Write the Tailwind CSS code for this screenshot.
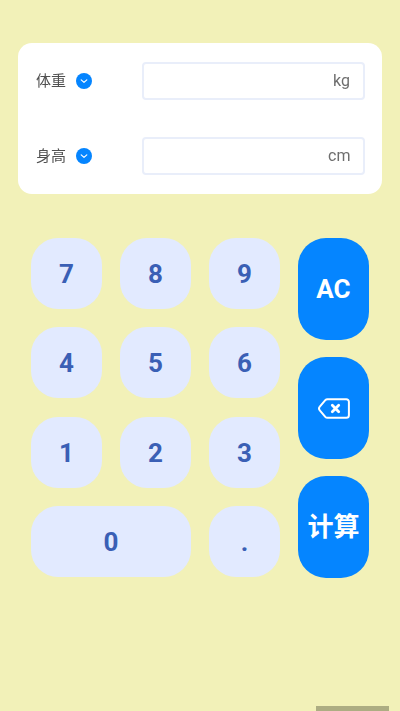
<!doctype html>
<html lang="zh">
<head>
<meta charset="utf-8">
<script src="https://cdn.jsdelivr.net/npm/@tailwindcss/browser@4"></script>
</head>
<body class="m-0">
<div class="relative h-[711px] w-[400px] overflow-hidden bg-[#f2f1b8] font-['Roboto','Noto_Sans_CJK_SC',sans-serif]">
  <div class="pt-[43px] px-[18px]">
    <div class="h-[151px] rounded-[14px] bg-white pl-[18px] pr-[17px] pt-[19px] flex flex-col gap-[37px]">
      <div class="flex items-center h-[38px]">
        <span class="w-[40px] text-[15px] leading-[20px] text-[#505050] will-change-transform">体重</span>
        <svg class="w-4 h-4" viewBox="0 0 16 16"><circle cx="8" cy="8" r="8" fill="#0585ff"/><path d="M5.2 6.9 8 9.4l2.8-2.5" fill="none" stroke="#fff" stroke-width="1.2" stroke-linecap="round" stroke-linejoin="round"/></svg>
        <div class="ml-auto flex h-[38px] w-[223px] items-center justify-end rounded-[4px] border-2 border-[#e9eefa] pr-[13px] text-[16px] text-[#6e6e6e]"><span class="will-change-transform">kg</span></div>
      </div>
      <div class="flex items-center h-[38px]">
        <span class="w-[40px] text-[15px] leading-[20px] text-[#505050] will-change-transform">身高</span>
        <svg class="w-4 h-4" viewBox="0 0 16 16"><circle cx="8" cy="8" r="8" fill="#0585ff"/><path d="M5.2 6.9 8 9.4l2.8-2.5" fill="none" stroke="#fff" stroke-width="1.2" stroke-linecap="round" stroke-linejoin="round"/></svg>
        <div class="ml-auto flex h-[38px] w-[223px] items-center justify-end rounded-[4px] border-2 border-[#e9eefa] pr-[13px] text-[16px] text-[#6e6e6e]"><span class="will-change-transform">cm</span></div>
      </div>
    </div>
  </div>
  <div class="mt-[44px] ml-[31px] flex gap-[18px]">
    <div class="grid w-[249px] grid-cols-[71px_71px_71px] auto-rows-[71px] gap-x-[18px] gap-y-[18.33px] text-[26px] font-bold text-[#3a5fb5]">
      <div class="flex items-center justify-center rounded-[27px] bg-[#e2eaff] pt-[2px]">7</div>
      <div class="flex items-center justify-center rounded-[27px] bg-[#e2eaff] pt-[2px]">8</div>
      <div class="flex items-center justify-center rounded-[27px] bg-[#e2eaff] pt-[2px]">9</div>
      <div class="flex items-center justify-center rounded-[27px] bg-[#e2eaff] pt-[2px]">4</div>
      <div class="flex items-center justify-center rounded-[27px] bg-[#e2eaff] pt-[2px]">5</div>
      <div class="flex items-center justify-center rounded-[27px] bg-[#e2eaff] pt-[2px]">6</div>
      <div class="flex items-center justify-center rounded-[27px] bg-[#e2eaff] pt-[2px]">1</div>
      <div class="flex items-center justify-center rounded-[27px] bg-[#e2eaff] pt-[2px]">2</div>
      <div class="flex items-center justify-center rounded-[27px] bg-[#e2eaff] pt-[2px]">3</div>
      <div class="col-span-2 flex items-center justify-center rounded-[27px] bg-[#e2eaff] pt-[2px]">0</div>
      <div class="flex items-center justify-center rounded-[27px] bg-[#e2eaff] pt-[2px]">.</div>
    </div>
    <div class="flex w-[71px] flex-col gap-[17.5px]">
      <div class="flex h-[101.5px] items-center justify-center rounded-[28px] bg-[#0585ff] pt-[2px] text-[26px] font-bold text-white">AC</div>
      <div class="flex h-[101.5px] items-center justify-center rounded-[28px] bg-[#0585ff] pt-[2px]">
        <svg class="w-[32px] h-[21px]" viewBox="0 0 32 21"><path d="M9.5 1.2h18.8a2.6 2.6 0 0 1 2.6 2.6v13.4a2.6 2.6 0 0 1-2.6 2.6H9.5a3 3 0 0 1-2.2-1L1.8 12.3a2.7 2.7 0 0 1 0-3.6l5.5-6.5a3 3 0 0 1 2.2-1Z" fill="none" stroke="#fff" stroke-width="2"/><path d="M14.3 7.3l6.4 6.4M20.7 7.3l-6.4 6.4" fill="none" stroke="#fff" stroke-width="2.8" stroke-linecap="round"/></svg>
      </div>
      <div class="flex h-[101.5px] items-center justify-center rounded-[28px] bg-[#0585ff] pt-[2px] text-[26px] font-bold text-white">计算</div>
    </div>
  </div>
  <div class="absolute bottom-0 left-[316px] h-[5px] w-[73px] bg-[#adad82]"></div>
</div>
</body>
</html>
